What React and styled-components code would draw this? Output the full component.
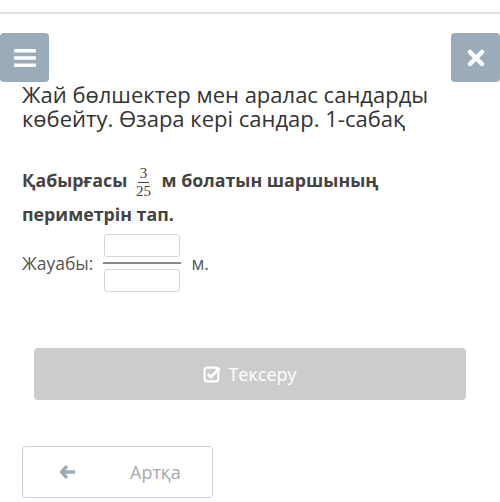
import React from 'react'
import styled, { createGlobalStyle } from 'styled-components'

const Global = createGlobalStyle`
  body {
    margin: 0;
    background: #fff;
    font-family: "Open Sans", "Noto Sans", sans-serif;
  }
`

function App() {
  return (
    <Page>
      <Global />
      <Header />
      <TopBar>
        <IconButton>
          <svg width="22" height="20" viewBox="0 0 22 20">
            <rect x="0" y="1" width="22" height="3.5" rx="1" fill="#fff" />
            <rect x="0" y="8.2" width="22" height="3.5" rx="1" fill="#fff" />
            <rect x="0" y="15.4" width="22" height="3.5" rx="1" fill="#fff" />
          </svg>
        </IconButton>
        <IconButton>
          <svg width="18" height="18" viewBox="0 0 18 18">
            <path d="M3 3 L15 15 M15 3 L3 15" stroke="#fff" strokeWidth="4.5" strokeLinecap="round" />
          </svg>
        </IconButton>
      </TopBar>
      <Title>Жай бөлшектер мен аралас сандарды көбейту. Өзара кері сандар. 1-сабақ</Title>
      <Question>
        Қабырғасы <Frac><span>3</span><span>25</span></Frac> м болатын шаршының периметрін тап.
      </Question>
      <AnswerRow>
        <Label>Жауабы:</Label>
        <FracInput>
          <Box />
          <Bar />
          <Box />
        </FracInput>
        <Label>м.</Label>
      </AnswerRow>
      <CheckButton>
        <svg width="18" height="18" viewBox="0 0 17 17">
          <rect x="1.5" y="2.5" width="13" height="13" rx="2.5" fill="none" stroke="#fff" strokeWidth="2" />
          <path d="M4.5 8.5 L7.5 11.5 L15.5 3" fill="none" stroke="#fff" strokeWidth="2.4" />
        </svg>
        Тексеру
      </CheckButton>
      <BackButton>
        <svg width="16" height="14" viewBox="0 0 16 14">
          <path d="M7 1 L1.5 7 L7 13 M2 7 H15" fill="none" stroke="#9aacb9" strokeWidth="3.4" strokeLinejoin="round" />
        </svg>
        <span>Артқа</span>
      </BackButton>
    </Page>
  )
}

export default App

const Page = styled.div`
width: 500px;
height: 502px;
overflow: hidden;
`

const Header = styled.div`
height: 12px;
border-bottom: 2px solid #e0e0e0;
`

const TopBar = styled.div`
display: flex;
justify-content: space-between;
margin-top: 19px;
`

const IconButton = styled.div`
width: 49px;
height: 49px;
background: #9aacb9;
border-radius: 4px;
display: flex;
align-items: center;
justify-content: center;
`

const Title = styled.h1`
margin: 0;
padding: 0 50px 0 22px;
font-size: 22px;
font-weight: 400;
line-height: 24px;
color: #333;
`

const Question = styled.p`
margin: 35px 0 0;
padding: 0 90px 0 22px;
font-size: 17.8px;
font-weight: 700;
line-height: 30px;
color: #444;
`

const Frac = styled.span`
display: inline-flex;
flex-direction: column;
align-items: center;
vertical-align: middle;
margin: 0 6px 0 4px;
font-family: "Liberation Serif", "DejaVu Serif", serif;
font-weight: 400;
font-size: 15px;
line-height: 15px;
color: #444;
span:first-child {
  border-bottom: 1px solid #444;
  padding: 0 2px 1px;
}
span:last-child {
  padding-top: 1px;
}
`

const AnswerRow = styled.div`
display: flex;
align-items: center;
gap: 10px;
margin-top: 5px;
padding-left: 22px;
`

const Label = styled.span`
font-size: 17.5px;
color: #555;
`

const FracInput = styled.div`
display: flex;
flex-direction: column;
align-items: center;
gap: 5px;
`

const Box = styled.div`
width: 74px;
height: 21px;
border: 1px solid #d8d8d8;
border-radius: 3px;
`

const Bar = styled.div`
width: 78px;
height: 2px;
background: #888;
`

const CheckButton = styled.div`
margin: 56px 34px 0;
height: 52px;
background: #cccccc;
border-radius: 4px;
display: flex;
align-items: center;
justify-content: center;
gap: 7px;
color: #fff;
font-size: 18px;
`

const BackButton = styled.div`
margin: 46px 0 0 22px;
height: 50px;
border: 1px solid #cfcfcf;
border-radius: 4px;
display: flex;
align-items: center;
padding-left: 37px;
box-sizing: content-box;
width: 152px;
gap: 54px;
font-size: 18px;
color: #a8a8a8;
`
